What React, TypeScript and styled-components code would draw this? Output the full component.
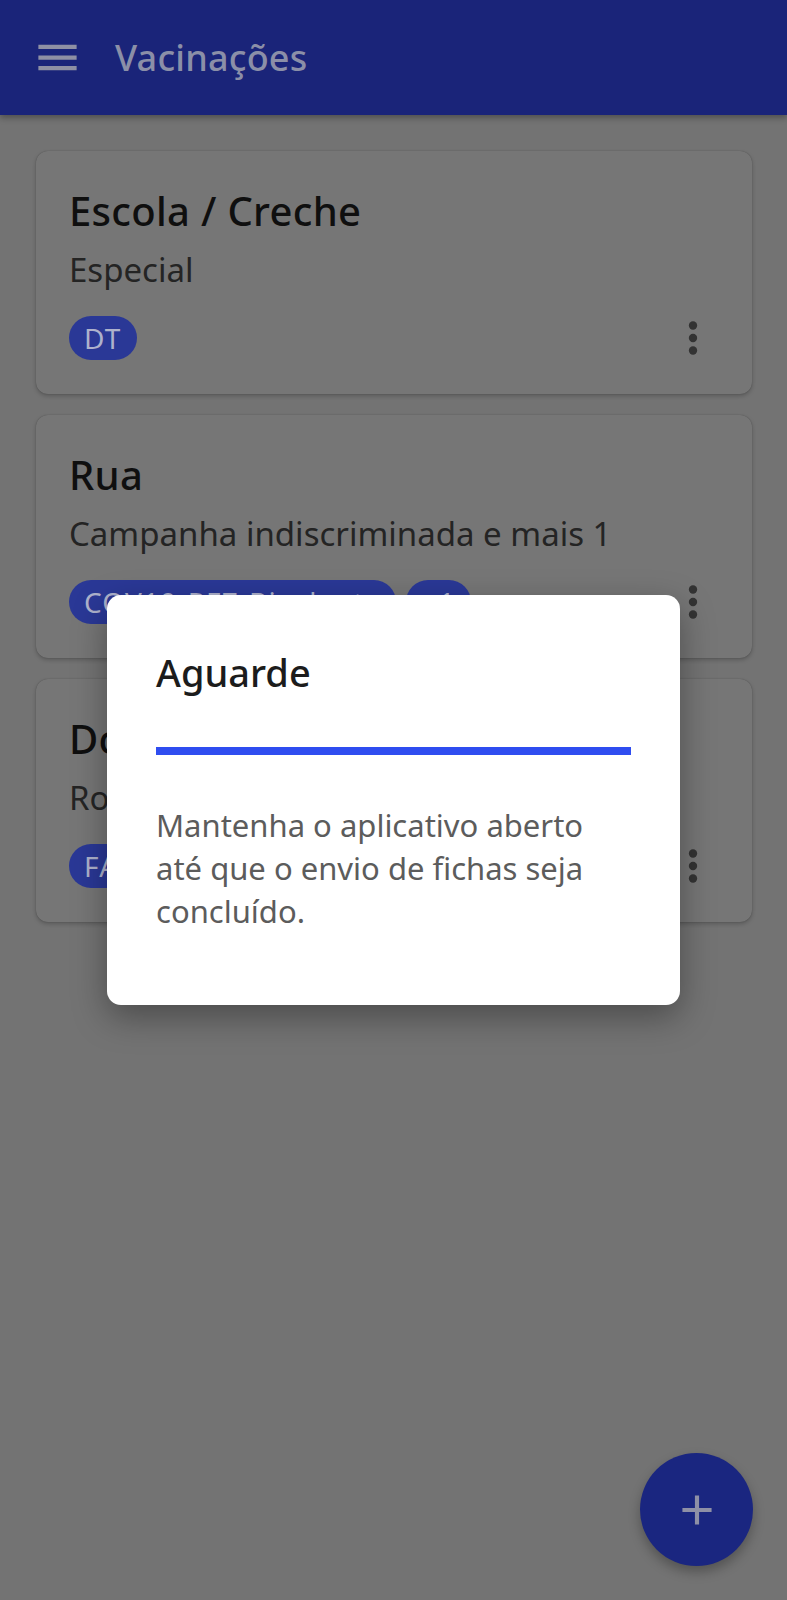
import React from "react";
import styled, { createGlobalStyle } from "styled-components";

type Campaign = {
    id: number;
    title: string;
    subtitle: string;
    chips: string[];
};

const campaigns: Campaign[] = [
    { id: 1, title: "Escola / Creche", subtitle: "Especial", chips: ["DT"] },
    { id: 2, title: "Rua", subtitle: "Campanha indiscriminada e mais 1", chips: ["COV19-PFZ-Bivalente", "+1"] },
    { id: 3, title: "Domicílio", subtitle: "Rotina", chips: ["FA"] },
];

const GlobalStyle = createGlobalStyle`
    html, body {
        margin: 0;
        padding: 0;
        background: #737373;
    }
    body {
        font-family: "Noto Sans", "Open Sans", sans-serif;
    }
`;

export default function App() {
    return (
        <Page>
            <GlobalStyle />
            <Header>
                <IconButton aria-label="menu">
                    <svg viewBox="0 0 24 24" width="51" height="51" fill="#8e90a4">
                        <path d="M3 18h18v-2H3v2zm0-5h18v-2H3v2zm0-7v2h18V6H3z" />
                    </svg>
                </IconButton>
                <Title>Vacinações</Title>
            </Header>

            <List>
                {campaigns.map((item) => (
                    <Card key={item.id}>
                        <CardTitle>{item.title}</CardTitle>
                        <CardSubtitle>{item.subtitle}</CardSubtitle>
                        <CardFooter>
                            <Chips>
                                {item.chips.map((chip) => (
                                    <Chip key={chip}>{chip}</Chip>
                                ))}
                            </Chips>
                            <MoreButton aria-label="mais">
                                <svg viewBox="0 0 24 24" width="50" height="50" fill="#333">
                                    <circle cx="12" cy="6" r="2" />
                                    <circle cx="12" cy="12" r="2" />
                                    <circle cx="12" cy="18" r="2" />
                                </svg>
                            </MoreButton>
                        </CardFooter>
                    </Card>
                ))}
            </List>

            <Fab aria-label="adicionar">
                <svg viewBox="0 0 24 24" width="50" height="50" fill="#8e90a6">
                    <path d="M19 13h-6v6h-2v-6H5v-2h6V5h2v6h6v2z" />
                </svg>
            </Fab>

            <Backdrop>
                <Dialog>
                    <DialogTitle>Aguarde</DialogTitle>
                    <Progress />
                    <DialogText>
                        Mantenha o aplicativo aberto até que o envio de fichas seja concluído.
                    </DialogText>
                </Dialog>
            </Backdrop>
        </Page>
    );
}

const Page = styled.div`
    position: relative;
    width: 787px;
    height: 1600px;
    overflow: hidden;
    background: #737373;
`;

const Header = styled.header`
    height: 115px;
    display: flex;
    align-items: center;
    gap: 32px;
    padding-left: 32px;
    background: #1a2479;
    box-shadow: 0 3px 6px rgba(0, 0, 0, 0.3);
    position: relative;
    z-index: 1;
`;

const IconButton = styled.button`
    display: flex;
    padding: 0;
    border: 0;
    background: none;
`;

const Title = styled.h1`
    margin: 0;
    font-size: 36px;
    font-weight: 500;
    color: #8b8fa8;
    letter-spacing: 0.2px;
`;

const List = styled.main`
    display: flex;
    flex-direction: column;
    gap: 21px;
    padding: 36px 35px 0 36px;
`;

const Card = styled.section`
    display: flex;
    flex-direction: column;
    padding: 36px 34px 34px 33px;
    background: #767676;
    border-radius: 12px;
    box-shadow: 0 2px 4px rgba(0, 0, 0, 0.22), 0 0 1px rgba(0, 0, 0, 0.3);
`;

const CardTitle = styled.h2`
    margin: 0;
    font-size: 40px;
    line-height: 48px;
    font-weight: 500;
    color: #0f0f0f;
    letter-spacing: 0.3px;
`;

const CardSubtitle = styled.p`
    margin: 15px 0 0;
    font-size: 33px;
    line-height: 40px;
    color: #242424;
`;

const CardFooter = styled.div`
    margin-top: 26px;
    height: 44px;
    display: flex;
    align-items: center;
    justify-content: space-between;
`;

const Chips = styled.div`
    display: flex;
    gap: 10px;
`;

const Chip = styled.span`
    height: 44px;
    display: inline-flex;
    align-items: center;
    padding: 0 15px;
    border-radius: 22px;
    background: #2a3896;
    color: #aeb2cc;
    font-size: 28px;
    letter-spacing: 1.2px;
`;

const MoreButton = styled.button`
    display: flex;
    align-items: center;
    height: 44px;
    padding: 0;
    border: 0;
    background: none;
`;

const Fab = styled.button`
    position: absolute;
    right: 34px;
    bottom: 34px;
    width: 113px;
    height: 113px;
    border: 0;
    border-radius: 50%;
    background: #1a2680;
    display: flex;
    align-items: center;
    justify-content: center;
    box-shadow: 0 6px 12px rgba(0, 0, 0, 0.28);
`;

const Backdrop = styled.div`
    position: absolute;
    inset: 0;
    z-index: 2;
    display: flex;
    align-items: center;
    justify-content: center;
`;

const Dialog = styled.div`
    width: 573px;
    height: 410px;
    box-sizing: border-box;
    padding: 53px 49px 0;
    background: #fff;
    border-radius: 14px;
    box-shadow: 0 12px 34px rgba(0, 0, 0, 0.35);
`;

const DialogTitle = styled.h3`
    margin: 0;
    font-size: 38px;
    line-height: 48px;
    font-weight: 500;
    color: #1c1c1c;
`;

const Progress = styled.div`
    margin-top: 51px;
    height: 8px;
    background: #2f4df0;
`;

const DialogText = styled.p`
    margin: 49px 0 0;
    font-size: 31px;
    line-height: 43px;
    color: #5c5c5c;
`;
